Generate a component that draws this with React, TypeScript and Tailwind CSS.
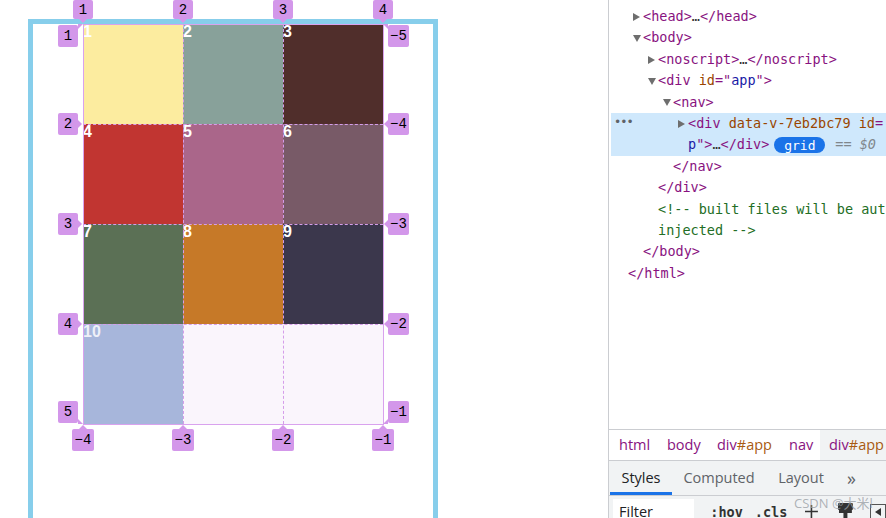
import React from 'react';

const cells = [
  { n: '1', bg: 'bg-[#fcec9f]', fg: 'text-white' },
  { n: '2', bg: 'bg-[#88a19a]', fg: 'text-white' },
  { n: '3', bg: 'bg-[#502e2b]', fg: 'text-white' },
  { n: '4', bg: 'bg-[#c13531]', fg: 'text-white' },
  { n: '5', bg: 'bg-[#aa668a]', fg: 'text-white' },
  { n: '6', bg: 'bg-[#785a67]', fg: 'text-white' },
  { n: '7', bg: 'bg-[#5b7055]', fg: 'text-white' },
  { n: '8', bg: 'bg-[#c67928]', fg: 'text-white' },
  { n: '9', bg: 'bg-[#3b374c]', fg: 'text-white' },
  { n: '10', bg: 'bg-[#a7b6db]', fg: 'text-[#eef0f8]' },
  { n: '', bg: 'bg-[#faf5fc]', fg: '' },
  { n: '', bg: 'bg-[#faf5fc]', fg: '' },
];

const DOWN = 'left-1/2 top-full -translate-x-1/2 border-x-[4px] border-t-[4px] border-x-transparent border-t-[#d397ea]';
const UP = 'left-1/2 bottom-full -translate-x-1/2 border-x-[4px] border-b-[4px] border-x-transparent border-b-[#d397ea]';
const RIGHT = 'left-full top-1/2 -translate-y-1/2 border-y-[4px] border-l-[4px] border-y-transparent border-l-[#d397ea]';
const LEFT = 'right-full top-1/2 -translate-y-1/2 border-y-[4px] border-r-[4px] border-y-transparent border-r-[#d397ea]';

// line-number badges of the grid overlay
const badges = [
  { t: '1', cls: 'w-[20px] h-[19px] left-[-10px] top-[-24px]', arrow: DOWN },
  { t: '2', cls: 'w-[20px] h-[19px] left-[90px] top-[-24px]', arrow: DOWN },
  { t: '3', cls: 'w-[20px] h-[19px] left-[190px] top-[-24px]', arrow: DOWN },
  { t: '4', cls: 'w-[20px] h-[19px] left-[290px] top-[-24px]', arrow: DOWN },

  { t: '1', cls: 'w-[20px] h-[22px] left-[-25px] top-[1px]', arrow: 'left-full top-[-1px] border-t-[5px] border-r-[5px] border-t-[#d397ea] border-r-transparent' },
  { t: '2', cls: 'w-[20px] h-[22px] left-[-25px] top-[89px]', arrow: RIGHT },
  { t: '3', cls: 'w-[20px] h-[22px] left-[-25px] top-[189px]', arrow: RIGHT },
  { t: '4', cls: 'w-[20px] h-[22px] left-[-25px] top-[289px]', arrow: RIGHT },
  { t: '5', cls: 'w-[20px] h-[22px] left-[-25px] top-[377px]', arrow: 'left-full bottom-[-1px] border-b-[5px] border-r-[5px] border-b-[#d397ea] border-r-transparent' },

  { t: '−5', cls: 'w-[21px] h-[22px] left-[305px] top-[1px]', arrow: 'right-full top-[-1px] border-t-[5px] border-l-[5px] border-t-[#d397ea] border-l-transparent' },
  { t: '−4', cls: 'w-[21px] h-[22px] left-[305px] top-[89px]', arrow: LEFT },
  { t: '−3', cls: 'w-[21px] h-[22px] left-[305px] top-[189px]', arrow: LEFT },
  { t: '−2', cls: 'w-[21px] h-[22px] left-[305px] top-[289px]', arrow: LEFT },
  { t: '−1', cls: 'w-[21px] h-[22px] left-[305px] top-[377px]', arrow: 'right-full bottom-[-1px] border-b-[5px] border-l-[5px] border-b-[#d397ea] border-l-transparent' },

  { t: '−4', cls: 'w-[22px] h-[22px] left-[-11px] top-[405px]', arrow: UP },
  { t: '−3', cls: 'w-[22px] h-[22px] left-[89px] top-[405px]', arrow: UP },
  { t: '−2', cls: 'w-[22px] h-[22px] left-[189px] top-[405px]', arrow: UP },
  { t: '−1', cls: 'w-[22px] h-[22px] left-[289px] top-[405px]', arrow: UP },
];

function Badge({ t, cls, arrow }: { t: string; cls: string; arrow: string }) {
  return (
    <div
      className={`absolute flex items-center justify-center rounded-[2px] bg-[#d397ea] font-['Liberation_Mono',monospace] text-[14px] leading-none text-black ${cls}`}
    >
      {t}
      <span className={`absolute h-0 w-0 ${arrow}`} />
    </div>
  );
}

function GridDemo() {
  return (
    <div className="relative ml-[50px] grid w-[300px] grid-cols-[repeat(3,100px)] grid-rows-[repeat(4,100px)]">
      {cells.map((c, i) => (
        <div
          key={i}
          className={`${c.bg} ${c.fg} font-['Liberation_Sans',Arial,sans-serif] text-[16px] font-bold leading-none`}
        >
          {c.n}
        </div>
      ))}

      {/* overlay lines */}
      <div className="absolute left-0 top-0 right-[-1px] bottom-[-1px] border border-[#d9a2ee]" />
      <div className="absolute top-0 bottom-0 left-[100px] border-l border-dashed border-[#d59dea]" />
      <div className="absolute top-0 bottom-0 left-[200px] border-l border-dashed border-[#d59dea]" />
      <div className="absolute left-0 right-0 top-[100px] border-t border-dashed border-[#d59dea]" />
      <div className="absolute left-0 right-0 top-[200px] border-t border-dashed border-[#d59dea]" />
      <div className="absolute left-0 right-0 top-[300px] border-t border-dashed border-[#d59dea]" />

      {badges.map((b, i) => (
        <Badge key={i} {...b} />
      ))}
    </div>
  );
}

function Caret({ open }: { open?: boolean }) {
  return (
    <span className="-ml-[10px] inline-flex w-[10px] items-center align-middle">
      {open ? (
        <svg width="8" height="7" viewBox="0 0 8 7">
          <polygon points="0,0 8,0 4,7" fill="#6e6e6e" />
        </svg>
      ) : (
        <svg width="7" height="8" viewBox="0 0 7 8">
          <polygon points="0,0 7,4 0,8" fill="#6e6e6e" />
        </svg>
      )}
    </span>
  );
}

const tag = 'text-[#881280]';
const attr = 'text-[#994500]';
const val = 'text-[#1a1aa6]';

function DevTools() {
  return (
    <div className="relative flex w-[278px] flex-none flex-col border-l border-[#cbcdd1]">
      {/* elements tree */}
      <div className="h-[429px] flex-none overflow-hidden pt-[6px] font-['DejaVu_Sans_Mono',monospace] text-[13.5px] leading-[21.4px]">
        <div className="whitespace-nowrap pl-[34px]">
          <Caret />
          <span className={tag}>&lt;head&gt;</span>
          <span className="text-[#333]">…</span>
          <span className={tag}>&lt;/head&gt;</span>
        </div>
        <div className="whitespace-nowrap pl-[34px]">
          <Caret open />
          <span className={tag}>&lt;body&gt;</span>
        </div>
        <div className="whitespace-nowrap pl-[49px]">
          <Caret />
          <span className={tag}>&lt;noscript&gt;</span>
          <span className="text-[#333]">…</span>
          <span className={tag}>&lt;/noscript&gt;</span>
        </div>
        <div className="whitespace-nowrap pl-[49px]">
          <Caret open />
          <span className={tag}>&lt;div </span>
          <span className={attr}>id</span>
          <span className={tag}>="</span>
          <span className={val}>app</span>
          <span className={tag}>"&gt;</span>
        </div>
        <div className="whitespace-nowrap pl-[64px]">
          <Caret open />
          <span className={tag}>&lt;nav&gt;</span>
        </div>

        {/* selected node */}
        <div className="relative ml-[2px] bg-[#cfe8fc]">
          <span className="absolute left-[3px] top-[1px] text-[12px] leading-[16px] tracking-[-1px] text-[#5f6368]">•••</span>
          <div className="overflow-hidden whitespace-nowrap pl-[77px]">
            <Caret />
            <span className={tag}>&lt;div </span>
            <span className={attr}>data-v-7eb2bc79</span>
            <span className={tag}> </span>
            <span className={attr}>id</span>
            <span className={tag}>=</span>
          </div>
          <div className="flex items-center whitespace-nowrap pl-[77px]">
            <span className={val}>p</span>
            <span className={tag}>"&gt;</span>
            <span className="text-[#333]">…</span>
            <span className={tag}>&lt;/div&gt;</span>
            <span className="ml-[5px] flex h-[16px] w-[51px] items-center justify-center rounded-full bg-[#1a73e8] text-[13px] leading-none text-white">
              grid
            </span>
            <span className="ml-[10px] italic text-[#80868b]">== $0</span>
          </div>
        </div>

        <div className="whitespace-nowrap pl-[64px]">
          <span className={tag}>&lt;/nav&gt;</span>
        </div>
        <div className="whitespace-nowrap pl-[49px]">
          <span className={tag}>&lt;/div&gt;</span>
        </div>
        <div className="overflow-hidden whitespace-nowrap pl-[49px] text-[#236e25]">&lt;!-- built files will be auto</div>
        <div className="whitespace-nowrap pl-[49px] text-[#236e25]">injected --&gt;</div>
        <div className="whitespace-nowrap pl-[34px]">
          <span className={tag}>&lt;/body&gt;</span>
        </div>
        <div className="whitespace-nowrap pl-[19px]">
          <span className={tag}>&lt;/html&gt;</span>
        </div>
      </div>

      {/* breadcrumbs */}
      <div className="flex h-[31px] flex-none items-stretch border-t border-[#cbcdd1] font-['Open_Sans',sans-serif] text-[14.5px] text-[#881280]">
        <span className="ml-[10px] flex w-[48px] items-center">html</span>
        <span className="flex w-[50px] items-center">body</span>
        <span className="flex w-[72px] items-center">
          div<span className="text-[#a85a12]">#app</span>
        </span>
        <span className="flex w-[31px] items-center">nav</span>
        <span className="flex flex-1 items-center bg-[#f1f3f4] pl-[9px]">
          div<span className="text-[#a85a12]">#app</span>
        </span>
      </div>

      {/* sidebar tabs */}
      <div className="flex h-[36px] flex-none border-y border-[#cbcdd1] bg-[#f1f3f4] font-['Open_Sans',sans-serif] text-[14.5px] text-[#5f6368]">
        <span className="ml-[1px] flex w-[62px] items-center justify-center border-b-[3px] border-[#1a73e8] pt-[3px] text-[#202124]">
          Styles
        </span>
        <span className="flex w-[94px] items-center justify-center">Computed</span>
        <span className="flex w-[70px] items-center justify-center">Layout</span>
        <span className="ml-[11px] flex items-center text-[18px]">»</span>
      </div>

      {/* filter toolbar */}
      <div className="flex h-[30px] flex-none items-start bg-[#f1f3f4]">
        <div className="ml-[4px] mt-[3px] h-[27px] w-[82px] bg-white pl-[6px] pt-[3px] font-['Open_Sans',sans-serif] text-[14.5px] leading-[20px] text-[#202124]">
          Filter
        </div>
        <span className="ml-[16px] mt-[6px] font-['DejaVu_Sans_Mono',monospace] text-[13.5px] font-bold leading-[20px] text-[#333]">
          :hov
        </span>
        <span className="ml-[12px] mt-[6px] font-['DejaVu_Sans_Mono',monospace] text-[13.5px] font-bold leading-[20px] text-[#333]">
          .cls
        </span>
        <svg className="ml-[18px] mt-[9px]" width="13" height="13" viewBox="0 0 13 13">
          <path d="M6.5 0v13M0 6.5h13" stroke="#333" strokeWidth="1.6" />
        </svg>
        <svg className="ml-[19px] mt-[6px]" width="17" height="20" viewBox="0 0 17 20">
          <rect x="1" y="1" width="15" height="7" rx="1" fill="#333" />
          <rect x="2" y="8" width="13" height="3" fill="#333" />
          <rect x="6.5" y="11" width="4" height="9" fill="#333" />
        </svg>
        <div className="ml-[16px] mt-[8px] flex h-[15px] w-[16px] items-center justify-center border border-[#555]">
          <svg width="6" height="8" viewBox="0 0 6 8">
            <polygon points="6,0 0,4 6,8" fill="#333" />
          </svg>
        </div>
      </div>

      {/* watermark */}
      <span className="absolute left-[185px] top-[495px] font-['Open_Sans','Noto_Sans_CJK_SC',sans-serif] text-[13px] leading-[16px] text-[#9aa0a6]/80">
        CSDN @大米l
      </span>
    </div>
  );
}

export default function App() {
  return (
    <div className="flex h-[518px] w-[886px] overflow-hidden bg-white">
      <div className="w-[608px] flex-none pl-[28px] pt-[19px]">
        <div className="h-[499px] w-[410px] border-[5px] border-b-0 border-[#87ceeb]">
          <GridDemo />
        </div>
      </div>
      <DevTools />
    </div>
  );
}
